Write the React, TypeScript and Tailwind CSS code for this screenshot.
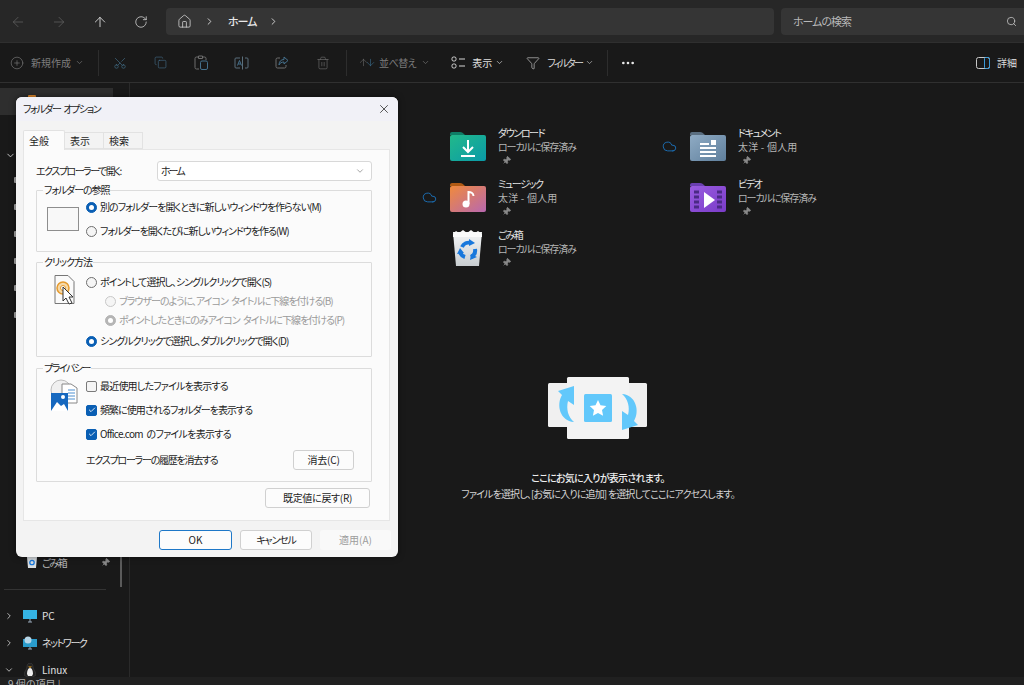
import React from "react";
import { ArrowLeft, ArrowRight, ArrowUp, RotateCw, House, ChevronRight, ChevronDown, Search, CirclePlus, Scissors, Copy, Trash2, ArrowDown, Funnel, Ellipsis, Cloud, Pin, Check, X } from "lucide-react";

const font = "font-['Noto_Sans_CJK_JP','Noto_Sans',sans-serif] [font-feature-settings:'palt']";

function Folder({ tab, a, b, children }: { tab: string; a: string; b: string; children?: React.ReactNode }) {
  const id = a.replace("#", "g");
  return (
    <svg width="36" height="30" viewBox="0 0 36 30">
      <defs>
        <linearGradient id={id} x1="0" y1="0" x2="1" y2="1">
          <stop offset="0" stopColor={a} />
          <stop offset="1" stopColor={b} />
        </linearGradient>
      </defs>
      <path d="M0 3a2 2 0 0 1 2-2h8c2 0 3 1 5 3h-15z" fill={tab} />
      <path d="M0 6a2 2 0 0 1 2-2h32a2 2 0 0 1 2 2v22a2 2 0 0 1-2 2H2a2 2 0 0 1-2-2z" fill={`url(#${id})`} />
      {children}
    </svg>
  );
}

function Item({ cloud, icon, title, sub, subTrack }: { cloud?: boolean; icon: React.ReactNode; title: string; sub: string; subTrack: string }) {
  return (
    <div className="flex h-[51px] w-[240px] items-start">
      <div className="flex h-[36px] w-[28px] shrink-0 items-center">
        {cloud && <Cloud size={15} strokeWidth={1.5} className="text-[#1c6fb5]" />}
      </div>
      <div className="flex h-[36px] w-[48px] shrink-0 items-center">{icon}</div>
      <div className="-mt-[2px] flex flex-col text-[10px] leading-[14px]">
        <span className="tracking-[-1.4px] text-[#e6e6e6]">{title}</span>
        <span className={`text-[#b5b5b5] ${subTrack}`}>{sub}</span>
        <Pin size={9} strokeWidth={2} fill="#8a8a8a" className="mt-[2px] ml-[4px] rotate-45 text-[#8a8a8a]" />
      </div>
    </div>
  );
}

function ToolIcon({ children }: { children: React.ReactNode }) {
  return <div className="flex w-[40.5px] items-center justify-center">{children}</div>;
}

function Radio({ on, dim, label, className = "" }: { on?: boolean; dim?: boolean; label: string; className?: string }) {
  const ring = dim
    ? on ? "border-[#b5b5b5] bg-[#b5b5b5]" : "border-[#c8c8c8] bg-[#f5f5f5]"
    : on ? "border-[#0a5fb4] bg-[#0a5fb4]" : "border-[#6e6e6e] bg-[#f5f5f5]";
  return (
    <div className={`flex h-[14px] items-center gap-[3px] ${className}`}>
      <span className={`flex h-[11px] w-[11px] shrink-0 items-center justify-center rounded-full border ${ring}`}>
        {on && <span className="h-[5px] w-[5px] rounded-full bg-white" />}
      </span>
      <span className={`whitespace-nowrap ${dim ? "text-[#9a9a9a]" : "text-[#1c1c1c]"}`}>{label}</span>
    </div>
  );
}

function Check2({ on, label, track }: { on?: boolean; label: string; track: string }) {
  return (
    <div className="flex h-[14px] items-center gap-[3px]">
      <span className={`flex h-[11px] w-[11px] shrink-0 items-center justify-center rounded-[2px] border ${on ? "border-[#0a5fb4] bg-[#0a5fb4]" : "border-[#7a7a7a] bg-[#f5f5f5]"}`}>
        {on && <Check size={8} strokeWidth={2.5} className="text-white" />}
      </span>
      <span className={`text-[#1c1c1c] ${track}`}>{label}</span>
    </div>
  );
}

function Group({ title, h, track, children }: { title: string; h: string; track: string; children: React.ReactNode }) {
  return (
    <div className={`relative rounded-[1px] border border-[#dcdcdc] ${h}`}>
      <span className={`absolute top-[-8px] left-[6px] bg-[#fbfbfb] px-[1px] text-[10px] leading-[14px] text-[#1c1c1c] ${track}`}>{title}</span>
      {children}
    </div>
  );
}

function Btn({ w, children, tone = "border-[#d0d0d0]" }: { w: string; children: React.ReactNode; tone?: string }) {
  return (
    <div className={`flex h-[20px] items-center justify-center rounded-[3px] border bg-[#fcfcfc] text-[#1c1c1c] ${w} ${tone}`}>
      {children}
    </div>
  );
}

function Dialog() {
  return (
    <div className="absolute top-[97px] left-[16px] flex h-[460px] w-[382px] flex-col rounded-[6px] bg-[#f3f3f3] text-[10px] leading-[14px] tracking-[-1px] [word-spacing:2px] shadow-[0_0_6px_rgba(0,0,0,0.5)]">
      <div className="flex h-[24px] shrink-0 items-center justify-between rounded-t-[6px] bg-[#f1f1f7] pr-[7px] pl-[7px] text-[#1c1c1c]">
        <span className="tracking-[-1.4px]">フォルダー オプション</span>
        <X size={14} strokeWidth={1.4} className="text-[#333]" />
      </div>
      <div className="mt-[9px] flex h-[19px] pl-[7px] tracking-normal">
        <div className="z-10 flex h-[20px] w-[42px] items-center rounded-t-[2px] border border-b-0 border-[#e2e2e2] bg-[#fbfbfb] pl-[5px] text-[#1c1c1c]">全般</div>
        <div className="mt-[2px] flex h-[17px] w-[39px] items-center border border-l-0 border-[#e2e2e2] pl-[5px] text-[#1c1c1c]">表示</div>
        <div className="mt-[2px] flex h-[17px] w-[39px] items-center border border-l-0 border-[#e2e2e2] pl-[5px] text-[#1c1c1c]">検索</div>
      </div>
      <div className="mr-[8px] ml-[7px] flex h-[372px] flex-col border border-[#e6e6e6] bg-[#fbfbfb] pt-[11px] pr-[17px] pl-[12px]">
        <div className="flex h-[20px] items-center justify-between text-[#1c1c1c]">
          <span className="tracking-[-1.5px]">エクスプローラーで開く:</span>
          <div className="flex h-[20px] w-[215px] items-center justify-between rounded-[3px] border border-[#d8d8d8] bg-white pr-[6px] pl-[3px]">
            <span className="tracking-[-2px]">ホーム</span>
            <ChevronDown size={10} strokeWidth={1.4} className="text-[#666]" />
          </div>
        </div>
        <div className="mt-[9px]">
          <Group title="フォルダーの参照" h="h-[62px]" track="tracking-[-1.1px]">
            <div className="flex items-center pt-[9px] pl-[10px]">
              <div className="mr-[7px] h-[24px] w-[32px] border border-[#8e8e8e] bg-[#f8f8f8]" />
              <div className="flex flex-col gap-[10px] text-[10px]">
                <Radio on label="別のフォルダーを開くときに新しいウィンドウを作らない(M)" />
                <Radio label="フォルダーを開くたびに新しいウィンドウを作る(W)" />
              </div>
            </div>
          </Group>
        </div>
        <div className="mt-[10px]">
          <Group title="クリック方法" h="h-[95px]" track="tracking-[-1px]">
            <div className="flex pt-[12px] pl-[15px]">
              <svg width="27" height="34" viewBox="0 0 27 34" className="mr-[7px] shrink-0">
                <path d="M3 .5h13l6 6v22H3z" fill="#fafafa" stroke="#777" />
                <circle cx="11" cy="13" r="6" fill="#f6d9a8" stroke="#e59a2e" strokeWidth="1.5" />
                <circle cx="11" cy="13" r="2.5" fill="#fff" stroke="#e59a2e" />
                <path d="M11 12l0 14 3-3 3 6 3-1-3-6 4 0z" fill="#fff" stroke="#333" strokeWidth="1" />
              </svg>
              <div className="flex flex-col">
                <Radio label="ポイントして選択し、シングルクリックで開く(S)" />
                <Radio dim label="ブラウザーのように、アイコン タイトルに下線を付ける(B)" className="mt-[5px] ml-[19px]" />
                <Radio dim on label="ポイントしたときにのみアイコン タイトルに下線を付ける(P)" className="mt-[5px] ml-[19px]" />
                <Radio on label="シングルクリックで選択し、ダブルクリックで開く(D)" className="mt-[7px]" />
              </div>
            </div>
          </Group>
        </div>
        <div className="mt-[11px]">
          <Group title="プライバシー" h="h-[114px]" track="tracking-[-1.5px]">
            <div className="flex pt-[10px] pl-[11px]">
              <svg width="31" height="32" viewBox="0 0 31 32" className="mr-[7px] shrink-0">
                <circle cx="13" cy="11" r="10" fill="#f0f0f0" stroke="#bbb" />
                <path d="M14 5h9l6 4v15H14z" fill="#fff" stroke="#888" />
                <path d="M20 11h7M20 14h7M20 17h7M20 20h7" stroke="#4d8fd0" />
                <path d="M3 14h17v18H3z" fill="#1668bf" />
                <path d="M3 32l6-9 4 4 3-2 4 7z" fill="#fff" />
                <circle cx="15" cy="18" r="2" fill="#fff" />
              </svg>
              <div className="flex w-[268px] flex-col">
                <Check2 track="tracking-[-0.8px]" label="最近使用したファイルを表示する" />
                <div className="mt-[10px]"><Check2 on track="tracking-[-0.95px]" label="頻繁に使用されるフォルダーを表示する" /></div>
                <div className="mt-[10px]"><Check2 on track="tracking-[-0.7px]" label="Office.com のファイルを表示する" /></div>
                <div className="mt-[9px] flex items-center justify-between">
                  <span className="tracking-[-1.25px] text-[#1c1c1c]">エクスプローラーの履歴を消去する</span>
                  <Btn w="w-[61px]"><span className="tracking-[-0.2px]">消去(C)</span></Btn>
                </div>
              </div>
            </div>
          </Group>
        </div>
        <div className="mt-[6px] flex justify-end pr-[2px]">
          <Btn w="w-[105px]"><span className="tracking-[-0.3px]">既定値に戻す(R)</span></Btn>
        </div>
      </div>
      <div className="mt-[9px] flex justify-end gap-[8px] pr-[7px]">
        <Btn w="w-[73px]" tone="border-[#1e78c8]"><span className="tracking-normal">OK</span></Btn>
        <Btn w="w-[72px]"><span className="tracking-[-1.2px]">キャンセル</span></Btn>
        <div className="flex h-[20px] w-[71px] items-center justify-center rounded-[3px] bg-[#f9f9f9] tracking-normal text-[#9c9c9c]">適用(A)</div>
      </div>
    </div>
  );
}

function Side({ label, icon, track = "" }: { label: string; icon: React.ReactNode; track?: string }) {
  return (
    <div className="flex h-[27px] items-center pl-[4px] text-[10px] text-[#e0e0e0]">
      <ChevronRight size={10} strokeWidth={2} className="text-[#cfcfcf]" />
      <span className="ml-[8px] flex w-[16px] items-center justify-center">{icon}</span>
      <span className={`ml-[4px] ${track}`}>{label}</span>
    </div>
  );
}

export default function App() {
  return (
    <div className={`relative flex h-[685px] w-[1024px] flex-col overflow-hidden bg-[#191919] ${font}`}>
      <div className="flex h-[43px] shrink-0 items-center border-b border-[#2f2f2f] bg-[#272727] pt-[1px]">
        <div className="flex w-[166px] items-center pl-[10px]">
          <ArrowLeft size={16} strokeWidth={1.2} className="text-[#5e5e5e]" />
          <ArrowRight size={16} strokeWidth={1.2} className="ml-[25px] text-[#5e5e5e]" />
          <ArrowUp size={16} strokeWidth={1.3} className="ml-[25px] text-[#e0e0e0]" />
          <RotateCw size={14} strokeWidth={1.3} className="ml-[26px] text-[#d8d8d8]" />
        </div>
        <div className="flex h-[27px] w-[608px] items-center rounded-[4px] bg-[#353535] pl-[11px]">
          <House size={15} strokeWidth={1.3} className="text-[#d0d0d0]" />
          <ChevronRight size={11} strokeWidth={2} className="ml-[12px] text-[#d8d8d8]" />
          <span className="ml-[13px] text-[11px] font-medium tracking-[-1px] text-[#e8e8e8]">ホーム</span>
          <ChevronRight size={11} strokeWidth={2} className="ml-[12px] text-[#d8d8d8]" />
        </div>
        <div className="ml-[7px] flex h-[27px] flex-1 items-center justify-between rounded-l-[4px] bg-[#353535] pr-[7px] pl-[12px] text-[11px] text-[#b8b8b8]">
          <span className="tracking-[-1px]">ホームの検索</span>
          <Search size={11} strokeWidth={1.6} className="text-[#d0d0d0]" />
        </div>
      </div>

      <div className="flex h-[40px] shrink-0 items-center border-b border-[#303030] text-[10px]">
        <CirclePlus size={14} strokeWidth={1.1} className="ml-[10px] text-[#7b7b7b]" />
        <span className="ml-[7px] text-[#7d7d7d]">新規作成</span>
        <ChevronDown size={9} className="ml-[4px] text-[#6e6e6e]" />
        <div className="mr-[1px] ml-[14px] h-[26px] w-px bg-[#2d2d2d]" />
        <ToolIcon><Scissors size={14} strokeWidth={1.1} className="-rotate-90 text-[#45708c]" /></ToolIcon>
        <ToolIcon><Copy size={13} strokeWidth={1.1} className="text-[#45708c]" /></ToolIcon>
        <ToolIcon>
          <svg width="14" height="15" viewBox="0 0 14 15" fill="none">
            <path d="M5 2H2.500A1.500 1.500 0 0 0 1 3.500v9A1.500 1.500 0 0 0 2.500 14H5M9 2h1.500A1.500 1.500 0 0 1 12 3.500V5M4.500 1h4v2.500h-4z" stroke="#6e6e6e" />
            <rect x="6.500" y="6" width="7" height="8.500" rx="1.500" stroke="#45708c" />
          </svg>
        </ToolIcon>
        <ToolIcon>
          <svg width="15" height="14" viewBox="0 0 15 14" fill="none" stroke="#5b6f7c" strokeWidth="1">
            <path d="M6 2H2a1 1 0 0 0-1 1v8a1 1 0 0 0 1 1h4M11 2h2a1 1 0 0 1 1 1v8a1 1 0 0 1-1 1h-2M8.500.5v13" />
            <path d="M3.500 9.500l2-5 2 5M4.300 8h2.500" stroke="#45708c" />
          </svg>
        </ToolIcon>
        <ToolIcon>
          <svg width="14" height="13" viewBox="0 0 14 13" fill="none">
            <path d="M5 2H2.500A1.500 1.500 0 0 0 1 3.500v7A1.500 1.500 0 0 0 2.500 12h7a1.500 1.500 0 0 0 1.500-1.500V9" stroke="#6e6e6e" />
            <path d="M9 1l4 3.500L9 8V6C6.500 6 5 7 4 9c0-3.500 2-5.500 5-5.500z" stroke="#45708c" strokeLinejoin="round" />
          </svg>
        </ToolIcon>
        <ToolIcon><Trash2 size={14} strokeWidth={1.1} className="text-[#6e6e6e]" /></ToolIcon>
        <div className="mr-[11px] ml-[3px] h-[26px] w-px bg-[#2d2d2d]" />
        <ArrowUp size={11} strokeWidth={1.1} className="text-[#777]" />
        <ArrowDown size={11} strokeWidth={1.1} className="-ml-[4px] text-[#3f7da6]" />
        <span className="ml-[3px] tracking-[-0.5px] text-[#7d7d7d]">並べ替え</span>
        <ChevronDown size={9} className="ml-[5px] text-[#6e6e6e]" />
        <svg width="16" height="13" viewBox="0 0 16 13" fill="none" stroke="#d8d8d8" strokeWidth="1" className="ml-[21px]">
          <rect x="1" y="1" width="4" height="4" rx="1.500" /><rect x="1" y="8" width="4" height="4" rx="1.500" />
          <path d="M8 3h6M8 10h6" />
        </svg>
        <span className="ml-[5px] text-[#e0e0e0]">表示</span>
        <ChevronDown size={9} className="ml-[3px] text-[#c0c0c0]" />
        <Funnel size={14} strokeWidth={1.1} className="ml-[22px] text-[#d0d0d0]" />
        <span className="ml-[7px] tracking-[-1.8px] text-[#dcdcdc]">フィルター</span>
        <ChevronDown size={9} className="ml-[3px] text-[#b0b0b0]" />
        <div className="mr-[12px] ml-[13px] h-[26px] w-px bg-[#2d2d2d]" />
        <Ellipsis size={16} strokeWidth={2} className="text-[#e8e8e8]" />
        <div className="ml-auto flex items-center pr-[7px]">
          <svg width="14" height="12" viewBox="0 0 14 12" fill="none">
            <rect x=".5" y=".5" width="13" height="11" rx="2" stroke="#c8c8c8" />
            <rect x="8.500" y=".5" width="5" height="11" rx="1" stroke="#3a9ad9" />
          </svg>
          <span className="ml-[7px] text-[#dcdcdc]">詳細</span>
        </div>
      </div>

      <div className="flex min-h-0 flex-1">
        <div className="relative flex w-[130px] shrink-0 flex-col overflow-hidden border-r border-[#2a2a2a] pt-[5px] [&>*]:shrink-0">
          <div className="h-[27px] w-[113px] bg-[#2e2e2e] pt-[7px] pl-[28px]">
            <div className="h-[6px] w-[8px] rounded-[1px] bg-[#e08a2e]" />
          </div>
          <div className="mt-[32px] flex h-[16px] items-center pl-[5px]">
            <ChevronDown size={11} strokeWidth={2} className="text-[#d0d0d0]" />
          </div>
          <div className="mt-[14px] flex flex-col gap-[21px] pl-[14px]">
            {[0, 1, 2, 3, 4, 5].map((n) => (
              <div key={n} className="h-[6px] w-[6px] rounded-[1px] bg-[#a8a8a8]" />
            ))}
          </div>
          <div className="mt-[234px] flex h-[20px] items-center pr-[19px] pl-[27px] text-[10px] text-[#b8b8b8]">
            <svg width="10" height="12" viewBox="0 0 10 12">
              <path d="M0 1h10L9 12H1z" fill="#d8dde0" />
              <circle cx="5" cy="6.500" r="2.200" fill="none" stroke="#1878dc" strokeWidth="1.300" />
            </svg>
            <span className="ml-[5px] tracking-[-1.4px]">ごみ箱</span>
            <Pin size={9} fill="#8a8a8a" className="ml-auto rotate-45 text-[#8a8a8a]" />
          </div>
          <div className="mt-[17px] ml-[4px] h-px w-[102px] bg-[#333]" />
          <div className="mt-[12px]">
            <Side label="PC" icon={<svg width="14" height="14" viewBox="0 0 14 14"><rect y="1" width="14" height="9" fill="#35b4e4" /><path d="M5 13h4M7 10v3" stroke="#9ab" /></svg>} />
            <Side label="ネットワーク" track="tracking-[-1.4px]" icon={<svg width="14" height="14" viewBox="0 0 14 14"><rect y="3" width="14" height="8" fill="#2a9ccc" /><circle cx="5" cy="4" r="3.500" fill="#b8d6e8" /><path d="M5 13h4M7 11v2" stroke="#9ab" /></svg>} />
            <div className="flex h-[27px] items-center pl-[4px] text-[10px] text-[#e0e0e0]">
              <ChevronDown size={10} strokeWidth={2} className="text-[#cfcfcf]" />
              <span className="ml-[8px] flex w-[16px] items-center justify-center">
                <svg width="12" height="14" viewBox="0 0 12 14"><path d="M6 0c2 0 3 2 3 4 0 2 3 5 3 8l-3 2H3l-3-2c0-3 3-6 3-8 0-2 1-4 3-4z" fill="#222" stroke="#555" strokeWidth=".4" /><path d="M6 5c2 0 3 3 3 6l-1 2H4l-1-2c0-3 1-6 3-6z" fill="#eee" /><path d="M4 3.500h4l-2 1.500z" fill="#e8a020" /></svg>
              </span>
              <span className="ml-[4px]">Linux</span>
            </div>
          </div>
          <div className="absolute top-[30px] right-[7px] bottom-[90px] w-[2px] bg-[#5a5a5a]" />
        </div>
        <div className="relative flex min-w-0 flex-1 flex-col pt-[45px] pl-[292px]">
          <div className="grid w-[480px] grid-cols-2">
            <Item subTrack="tracking-[-1.1px]" title="ダウンロード" sub="ローカルに保存済み" icon={
              <Folder tab="#0f7d66" a="#22b98a" b="#0a9aa8">
                <path d="M18 9v12M13 16l5 5 5-5M11 25h14" fill="none" stroke="#fff" strokeWidth="2" />
              </Folder>} />
            <Item cloud subTrack="tracking-[0.2px]" title="ドキュメント" sub="太洋 - 個人用" icon={
              <Folder tab="#5a6e80" a="#8fabc4" b="#5f7f9c">
                <path d="M10 13h9M10 17h16M10 21h16M10 25h16" stroke="#fff" strokeWidth="1.800" />
                <rect x="21" y="9" width="5" height="5" fill="#fff" />
              </Folder>} />
            <Item cloud subTrack="tracking-[0.2px]" title="ミュージック" sub="太洋 - 個人用" icon={
              <Folder tab="#b05a14" a="#f08a3c" b="#b868b0">
                <circle cx="16" cy="22" r="3.500" fill="#fff" />
                <path d="M18.500 22V10c2 0 5 1 5 4" fill="none" stroke="#fff" strokeWidth="2" />
              </Folder>} />
            <Item subTrack="tracking-[-1.1px]" title="ビデオ" sub="ローカルに保存済み" icon={
              <Folder tab="#6a3fb0" a="#9a5ce0" b="#7a3cc8">
                <path d="M14 10l11 8-11 8z" fill="#fff" />
                <path d="M4 10h5M4 15h5M4 20h5M4 25h5M27 10h5M27 15h5M27 20h5M27 25h5" stroke="#4b2a85" strokeWidth="3" />
              </Folder>} />
            <Item subTrack="tracking-[-1.1px]" title="ごみ箱" sub="ローカルに保存済み" icon={
              <svg width="36" height="38" viewBox="0 0 36 38" className="-mt-[1px]">
                <defs>
                  <linearGradient id="bin" x1="0" y1="0" x2="0" y2="1">
                    <stop offset="0" stopColor="#f4f6f7" />
                    <stop offset="1" stopColor="#c8cdd0" />
                  </linearGradient>
                </defs>
                <path d="M3 3h29l-3 34H6z" fill="url(#bin)" />
                <path d="M3 5l3-3 3 2 4-3 4 3 4-3 4 3 3-2 4 3v3H3z" fill="#fafbfb" />
                <g fill="none" stroke="#1878dc" strokeWidth="4">
                  <path d="M12 18a7.500 7.500 0 0 1 9-4" />
                  <path d="M25 20a7.500 7.500 0 0 1-4 8" />
                  <path d="M15 28a7.500 7.500 0 0 1-5-5" />
                </g>
                <path d="M19 10l6 4-6 3zM27 28l-7 3 1-6zM7 25l3-6 4 5z" fill="#1878dc" />
              </svg>} />
          </div>
          <div className="absolute top-[294px] left-[418px] flex w-[100px] items-center">
            <svg width="100" height="64" viewBox="0 0 100 64">
              <rect y="6" width="28" height="44" rx="1.500" fill="#f0f0f0" />
              <rect x="70" y="6" width="29" height="44" rx="1.500" fill="#f0f0f0" />
              <rect x="19" y="0" width="62" height="62" rx="1.500" fill="#f3f3f3" />
              <rect x="36" y="17" width="28" height="28" rx="1.500" fill="#62c8fb" />
              <path d="M50 23l2.500 5.300 5.800.7-4.300 4 1.100 5.700-5.100-2.800-5.100 2.800 1.100-5.700-4.300-4 5.800-.7z" fill="#fff" />
              <path d="M26 45C12 44 8 28 14 18L10 14 26 9V28L20 24C18 32 20 40 26 45z" fill="#62c8fb" />
              <path d="M74 17C88 18 92 34 86 44L90 48 74 53V34L80 38C82 30 80 22 74 17z" fill="#62c8fb" />
            </svg>
          </div>
          <div className="absolute top-[387px] left-[329px] flex w-[278px] flex-col items-center text-[10px] leading-[16px] whitespace-nowrap">
            <span className="font-medium tracking-[-0.75px] text-[#ededed]">ここにお気に入りが表示されます。</span>
            <span className="tracking-[-0.85px] text-[#d4d4d4]">ファイルを選択し、[お気に入りに追加] を選択してここにアクセスします。</span>
          </div>
        </div>
      </div>
      <div className="h-[8px] shrink-0 overflow-visible bg-[#202020] pl-[8px] text-[10px] leading-[14px] text-[#b0b0b0]">9 個の項目 |</div>
      <Dialog />
    </div>
  );
}
